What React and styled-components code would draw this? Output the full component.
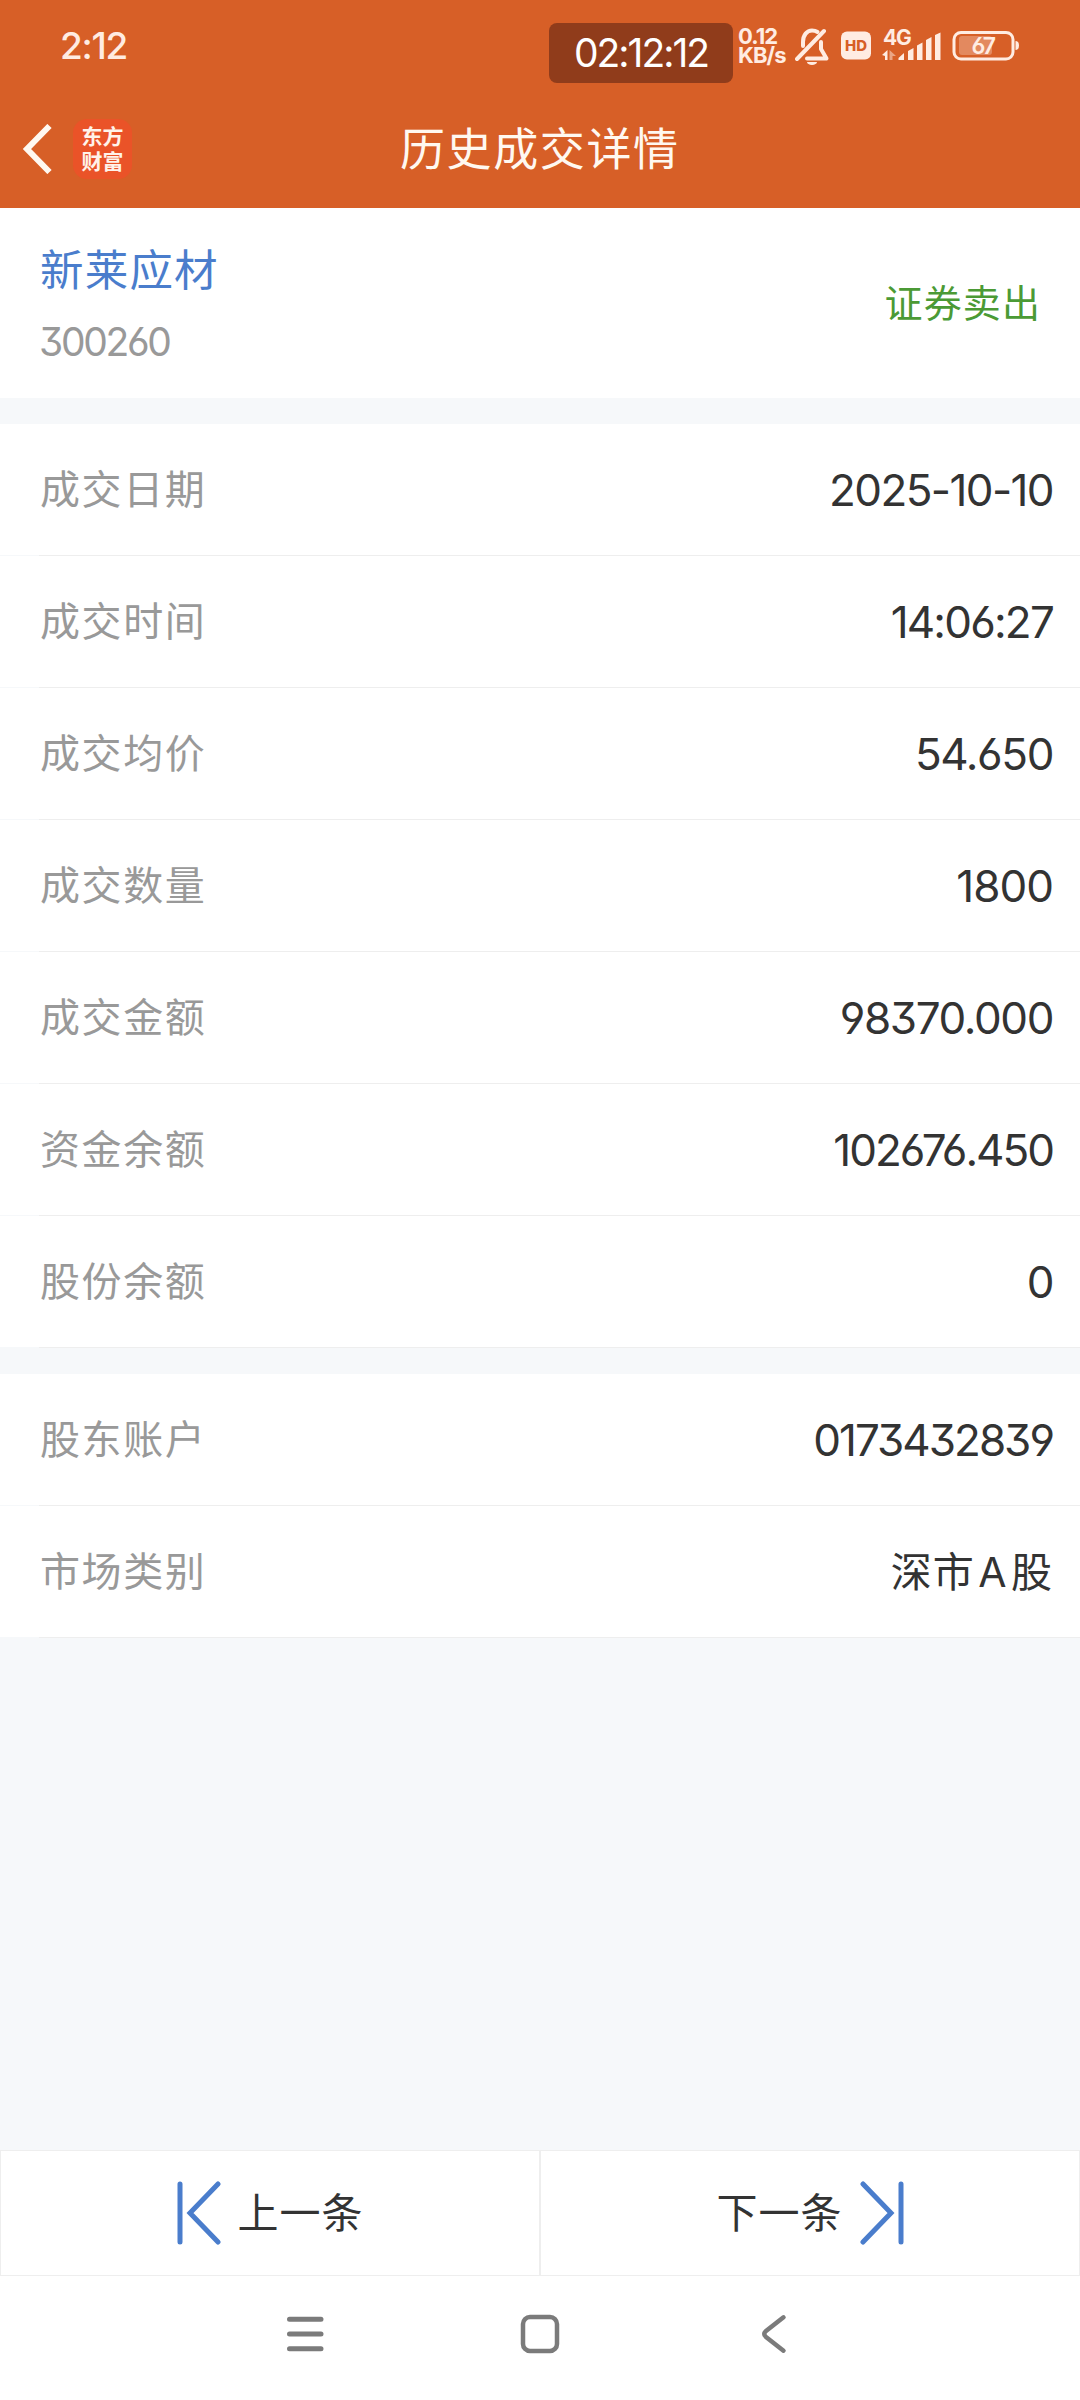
import React from "react";
import styled, { createGlobalStyle } from "styled-components";

/* Colours shared by several parts */
const colors = {
  brand: "#d75f27",
  logo: "#ea5328",
  link: "#4a7dcc",
  sell: "#4b9a35",
  text: "#333333",
  muted: "#999999",
  page: "#f6f8fa",
  line: "#eeeeee",
  status: "#ffece2",
};

const GlobalStyle = createGlobalStyle`
  * {
    box-sizing: border-box;
  }
  body {
    margin: 0;
    background: ${colors.page};
    font-family: Inter, "Noto Sans CJK SC", sans-serif;
    font-feature-settings: "cv03", "cv04", "cv09";
    color: ${colors.text};
  }
`;

const Screen = styled.div`
  width: 1080px;
  height: 2400px;
  display: flex;
  flex-direction: column;
  background: ${colors.page};
`;

/* Status bar */
const Top = styled.header`
  height: 208px;
  flex: none;
  background: ${colors.brand};
`;

const StatusBar = styled.div`
  height: 90px;
  padding: 0 61px 0 60px;
  display: flex;
  color: ${colors.status};
`;

const Clock = styled.div`
  flex: 1;
  margin-top: 22px;
  font-size: 37px;
  line-height: 48px;
  font-weight: 500;
  letter-spacing: -1.3px;
`;

const Timer = styled.div`
  width: 184px;
  height: 60px;
  flex: none;
  margin-top: 23px;
  border-radius: 8px;
  background: #903c1b;
  color: #fff;
  font-size: 39px;
  line-height: 60px;
  letter-spacing: -2px;
  text-align: center;
`;

const NetSpeed = styled.div`
  width: 48px;
  flex: none;
  margin: 27px 9px 0 5px;
  font-size: 22px;
  line-height: 19px;
  font-weight: 700;
  letter-spacing: -0.9px;
  white-space: nowrap;
`;

const StatusIcons = styled.svg`
  width: 224px;
  height: 50px;
  flex: none;
  margin-top: 20px;
  font-family: Inter, sans-serif;
`;

/* Title bar */
const TitleBar = styled.div`
  height: 118px;
  display: grid;
  grid-template-columns: 400px 1fr;
  align-items: center;
`;

const TitleLeft = styled.div`
  display: flex;
  align-items: center;
  padding-left: 22px;
  gap: 20px;
`;

const Logo = styled.div`
  width: 59px;
  height: 60px;
  padding-top: 4px;
  border-radius: 14px;
  background: ${colors.logo};
  color: #fff3ea;
  font-family: "Noto Sans CJK SC", sans-serif;
  font-size: 21px;
  line-height: 25px;
  font-weight: 700;
  text-align: center;
`;

const Title = styled.h1`
  margin: 2px 0 0;
  color: #fff8f0;
  font-size: 45px;
  line-height: 60px;
  font-weight: 400;
  letter-spacing: 1.6px;
  white-space: nowrap;
`;

/* Stock summary */
const Summary = styled.section`
  height: 190px;
  flex: none;
  padding: 0 39px 0 40px;
  display: flex;
  justify-content: space-between;
  background: #fff;
`;

const StockName = styled.div`
  margin-top: 32px;
  color: ${colors.link};
  font-size: 43.5px;
  line-height: 60px;
  letter-spacing: 1.2px;
`;

const StockCode = styled.div`
  margin: 14px 0 0 -1px;
  color: ${colors.muted};
  font-size: 39px;
  line-height: 56px;
  letter-spacing: -2.3px;
`;

const Side = styled.div`
  align-self: center;
  padding-bottom: 6px;
  color: ${colors.sell};
  font-size: 38px;
  letter-spacing: 1.1px;
`;

/* Detail rows */
const Group = styled.section`
  flex: none;
  margin-top: 26px;
`;

const Row = styled.div`
  height: 132px;
  padding: 0 27px 0 40px;
  display: flex;
  align-items: center;
  justify-content: space-between;
  background:
    linear-gradient(${colors.line}, ${colors.line}) 39px 100% / 100% 1px no-repeat,
    linear-gradient(${colors.page}, ${colors.page}) 0 100% / 39px 1px no-repeat,
    #fff;
`;

const Label = styled.span`
  padding-bottom: 6px;
  color: ${colors.muted};
  font-size: 40px;
  letter-spacing: 1.6px;
`;

const Value = styled.span`
  font-size: 44px;
  letter-spacing: ${(props) => props.$tracking ?? -1.4}px;
`;

const TextValue = styled.span`
  padding-bottom: 6px;
  font-size: 41px;
  letter-spacing: 1px;
  word-spacing: -9px;
`;

/* Bottom pager */
const Pager = styled.div`
  height: 126px;
  flex: none;
  margin-top: auto;
  display: grid;
  grid-template-columns: 1fr 1fr;
`;

const PagerButton = styled.button`
  padding: 0;
  display: flex;
  align-items: center;
  justify-content: center;
  gap: 17px;
  border: 1px solid ${colors.line};
  background: #fff;
  color: ${colors.text};
  font: inherit;
  font-size: 41px;
`;

const PagerText = styled.span`
  padding-bottom: 6px;
  letter-spacing: 1px;
`;

const NavBar = styled.nav`
  height: 124px;
  flex: none;
  padding: 0 285px 8px;
  display: flex;
  align-items: center;
  justify-content: space-between;
  background: #fff;
`;

const tradeRows = [
  { label: "成交日期", value: "2025-10-10", tracking: -1.6 },
  { label: "成交时间", value: "14:06:27", tracking: -1.8 },
  { label: "成交均价", value: "54.650" },
  { label: "成交数量", value: "1800", tracking: -1 },
  { label: "成交金额", value: "98370.000" },
  { label: "资金余额", value: "102676.450", tracking: -2 },
  { label: "股份余额", value: "0" },
];

const accountRows = [
  { label: "股东账户", value: "0173432839", tracking: -2 },
  { label: "市场类别", value: "深市 A 股", isText: true },
];

const Details = ({ rows }) => (
  <Group>
    {rows.map((row) => (
      <Row key={row.label}>
        <Label>{row.label}</Label>
        {row.isText ? (
          <TextValue>{row.value}</TextValue>
        ) : (
          <Value $tracking={row.tracking}>{row.value}</Value>
        )}
      </Row>
    ))}
  </Group>
);

/* Muted bell, HD badge, signal and battery */
const StatusGlyphs = () => (
  <StatusIcons viewBox="795 20 224 50" fill={colors.status}>
    <g fill="none" stroke={colors.status} strokeWidth="4" strokeLinejoin="round" strokeLinecap="round">
      <path d="M797 59L824 31" />
      <path d="M803 46V42C803 35 807 30.500 812 30.500C814 30.500 816 31 817.500 32" />
      <path d="M821 42V49L826.500 58.500H807" />
    </g>
    <path d="M807 62H817A5 3 0 0 1 807 62Z" />
    <rect x="841" y="31.500" width="30" height="28" rx="6" />
    <text x="856" y="51" fontSize="15" fontWeight="800" textAnchor="middle" fill={colors.brand}>
      HD
    </text>
    <text x="883" y="44.500" fontSize="21" fontWeight="700" letterSpacing="-1.200">
      4G
    </text>
    <path d="M882 55L887.500 50V60H885V56Z" />
    <path d="M889.500 60V50L896 56H892.500V60Z" opacity="0.5" />
    <path d="M898.500 58L904 53V60H898.500ZM908 51L913.500 48V60H908ZM917 45.500L922.500 42.500V60H917ZM926 40L931.500 37V60H926ZM935 35L940.500 32.500V60H935Z" />
    <rect x="954" y="32.500" width="59" height="26.500" rx="7" fill="none" stroke={colors.status} strokeWidth="3" />
    <rect x="959" y="36" width="33" height="19" rx="3" opacity="0.3" />
    <path d="M1015.500 41Q1019 41 1019 45.500Q1019 50 1015.500 50Z" />
    <text x="983" y="54" fontSize="23" fontWeight="600" letterSpacing="-1.500" textAnchor="middle">
      67
    </text>
  </StatusIcons>
);

const BackIcon = () => (
  <svg width="31" height="50" viewBox="0 0 31 50" fill="none" stroke="#fff8f0" strokeWidth="6">
    <path d="M27.500 2L5 25L27.500 48" />
  </svg>
);

const StepIcon = ({ flipped }) => (
  <svg
    width="44"
    height="64"
    viewBox="0 0 44 64"
    fill="none"
    stroke={colors.link}
    strokeWidth="5"
    strokeLinecap="round"
    transform={flipped ? "scale(-1 1)" : undefined}
  >
    <path d="M3 3V61M41 3L13 32L41 61" />
  </svg>
);

const App = () => (
  <>
    <GlobalStyle />
    <Screen>
      <Top>
        <StatusBar>
          <Clock>2:12</Clock>
          <Timer>02:12:12</Timer>
          <NetSpeed>
            0.12
            <br />
            KB/s
          </NetSpeed>
          <StatusGlyphs />
        </StatusBar>
        <TitleBar>
          <TitleLeft>
            <BackIcon />
            <Logo>
              东方
              <br />
              财富
            </Logo>
          </TitleLeft>
          <Title>历史成交详情</Title>
        </TitleBar>
      </Top>

      <Summary>
        <div>
          <StockName>新莱应材</StockName>
          <StockCode>300260</StockCode>
        </div>
        <Side>证券卖出</Side>
      </Summary>

      <Details rows={tradeRows} />
      <Details rows={accountRows} />

      <Pager>
        <PagerButton>
          <StepIcon />
          <PagerText>上一条</PagerText>
        </PagerButton>
        <PagerButton>
          <PagerText>下一条</PagerText>
          <StepIcon flipped />
        </PagerButton>
      </Pager>

      <NavBar>
        <svg width="40" height="40" viewBox="0 0 40 40" stroke="#7b7b7b" strokeWidth="5" strokeLinecap="round">
          <path d="M4.500 5.300H36M4.500 20H36M4.500 34.700H36" />
        </svg>
        <svg width="40" height="40" viewBox="0 0 40 40" fill="none" stroke="#7b7b7b" strokeWidth="4.500">
          <rect x="3" y="3" width="34" height="34" rx="7" />
        </svg>
        <svg
          width="40"
          height="40"
          viewBox="0 0 40 40"
          fill="none"
          stroke="#7b7b7b"
          strokeWidth="4.500"
          strokeLinecap="round"
        >
          <path d="M28.500 3.300L11 17Q7.500 20 11 23L28.500 36.700" />
        </svg>
      </NavBar>
    </Screen>
  </>
);

export default App;
